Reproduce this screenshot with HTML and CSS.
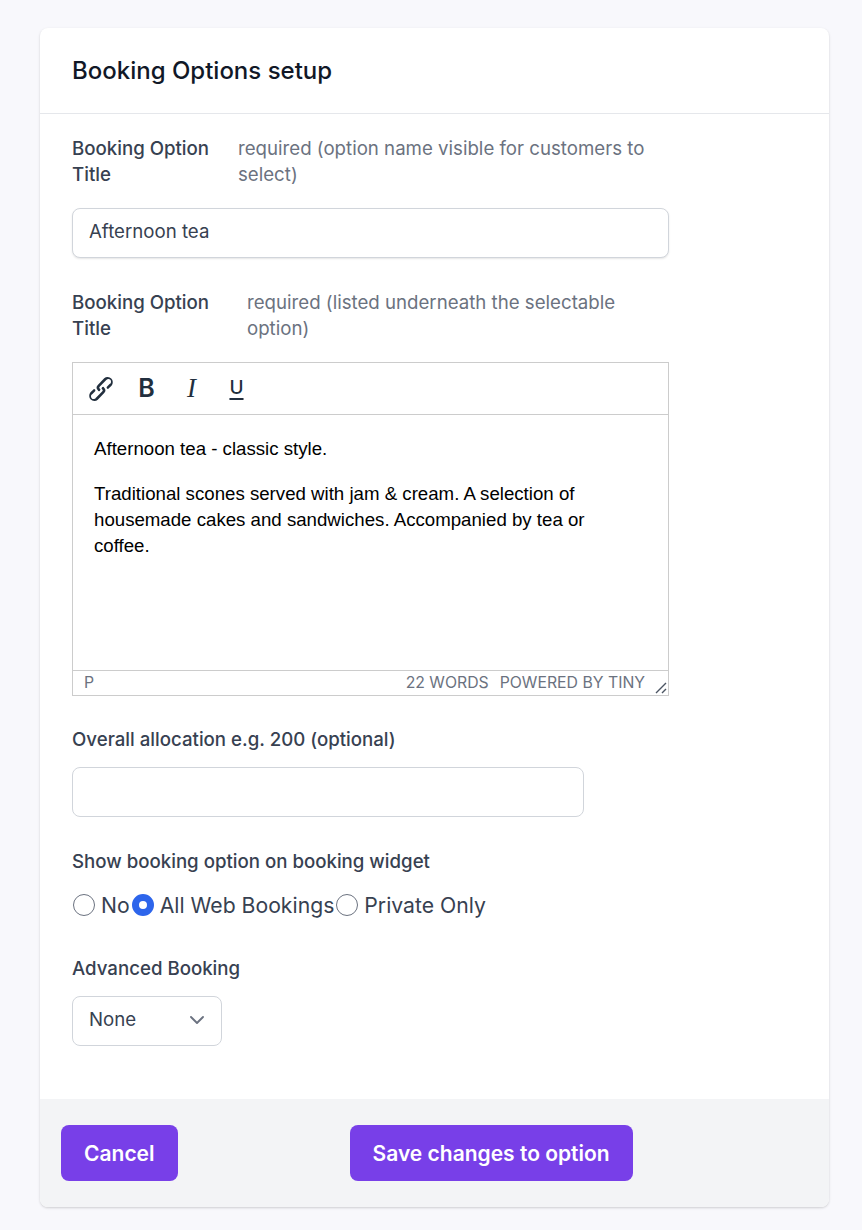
FILE: index.html
```html
<!doctype html>
<html lang="en">
  <head>
    <meta charset="UTF-8" />
    <title>Booking Options setup</title>
    <link rel="stylesheet" href="styles.css">
  </head>
  <body>
    <form class="card">
      <div class="card-header">
        <h2>Booking Options setup</h2>
      </div>

      <div class="card-body">
        <div class="label-row">
          <label class="label label-title" for="title">Booking Option Title</label>
          <span class="hint">required (option name visible for customers to select)</span>
        </div>
        <input class="input input-full" type="text" id="title" value="Afternoon tea" />

        <div class="label-row label-row-second">
          <label class="label label-desc">Booking Option Title</label>
          <span class="hint">required (listed underneath the selectable option)</span>
        </div>

        <div class="editor">
          <div class="toolbar">
            <span class="tool tool-link">
              <svg viewBox="0 0 24 24" width="32" height="32">
                <path d="M6.2 12.3a1 1 0 0 1 1.4 1.4l-2 2a2 2 0 1 0 2.6 2.8l4.8-4.8a1 1 0 0 0 0-1.4 1 1 0 1 1 1.4-1.3 2.9 2.9 0 0 1 0 4L9.6 20a3.9 3.9 0 0 1-5.5-5.5l2-2zm11.6-.6a1 1 0 0 1-1.4-1.4l2-2a2 2 0 1 0-2.6-2.8L11 10.3a1 1 0 0 0 0 1.4A1 1 0 1 1 9.6 13a2.9 2.9 0 0 1 0-4L14.4 4a3.9 3.9 0 0 1 5.5 5.5l-2 2z" />
              </svg>
            </span>
            <span class="tool tool-bold">B</span>
            <span class="tool tool-italic">I</span>
            <span class="tool tool-underline">U</span>
          </div>
          <div class="editor-content">
            <p>Afternoon tea - classic style.</p>
            <p>Traditional scones served with jam &amp; cream. A selection of housemade cakes and sandwiches. Accompanied by tea or coffee.</p>
          </div>
          <div class="statusbar">
            <span class="status-path">P</span>
            <span class="status-words">22 WORDS</span>
            <span class="status-brand">POWERED BY TINY</span>
            <svg class="resize" viewBox="0 0 12 12" width="12" height="12">
              <path d="M1 11 11 1M7 11l4-4" />
            </svg>
          </div>
        </div>

        <label class="label label-block label-allocation" for="allocation">Overall allocation e.g. 200 (optional)</label>
        <input class="input input-allocation" type="text" id="allocation" />

        <div class="label label-block label-show">Show booking option on booking widget</div>
        <div class="radios">
          <label class="radio"><input type="radio" name="show" /> <span>No</span></label>
          <label class="radio"><input type="radio" name="show" checked /> <span>All Web Bookings</span></label>
          <label class="radio"><input type="radio" name="show" /> <span>Private Only</span></label>
        </div>

        <label class="label label-block label-advanced" for="advanced">Advanced Booking</label>
        <div class="select-wrap">
          <select class="select" id="advanced">
            <option>None</option>
          </select>
          <svg class="chevron" viewBox="0 0 20 20" width="30" height="30">
            <path d="M6 8l4 4 4-4" />
          </svg>
        </div>
      </div>

      <div class="card-footer">
        <button type="button" class="btn">Cancel</button>
        <button type="submit" class="btn">Save changes to option</button>
      </div>
    </form>
  </body>
</html>
```

FILE: styles.css
```css
* {
  box-sizing: border-box;
}
body {
  margin: 0;
  padding: 28px 33px 23px 40px;
  background-color: #f8f8fc;
  font-family: Inter, "Noto Sans", sans-serif;
  color: #374151;
}
.card {
  background-color: #fff;
  border-radius: 8px;
  box-shadow: 0 1px 3px rgba(0, 0, 0, 0.12), 0 1px 2px rgba(0, 0, 0, 0.06);
  overflow: hidden;
}
.card-header {
  height: 86px;
  padding: 0 32px;
  display: flex;
  align-items: center;
  border-bottom: 1px solid #e5e7eb;
}
.card-header h2 {
  margin: 0;
  font-size: 24px;
  font-weight: 500;
  color: #111827;
}
.card-body {
  padding: 22px 32px 53px;
}
.label-row {
  display: flex;
  width: 597px;
}
.label-row-second {
  margin-top: 32px;
}
.label {
  font-size: 18.67px;
  line-height: 26px;
  font-weight: 500;
  color: #374151;
}
.label-title {
  flex: 0 0 166px;
}
.label-desc {
  flex: 0 0 175px;
}
.label-block {
  display: block;
}
.label-allocation {
  margin-top: 31px;
}
.label-show {
  margin-top: 32px;
}
.label-advanced {
  margin-top: 36px;
}
.hint {
  font-size: 18.67px;
  line-height: 26px;
  color: #6b7280;
}
.input {
  display: block;
  height: 50px;
  padding: 0 16px 4px;
  border: 1px solid #d1d5db;
  border-radius: 8px;
  background-color: #fff;
  font-family: inherit;
  font-size: 18.67px;
  color: #374151;
}
.input-full {
  width: 597px;
  margin-top: 20px;
  box-shadow: 0 1px 2px rgba(0, 0, 0, 0.1);
}
.input-allocation {
  width: 512px;
  margin-top: 14px;
}
.editor {
  width: 597px;
  height: 334px;
  margin-top: 20px;
  border: 1px solid #ccc;
  display: flex;
  flex-direction: column;
}
.toolbar {
  height: 52px;
  display: flex;
  align-items: center;
  border-bottom: 1px solid #ccc;
  color: #222f3e;
}
.tool {
  width: 45px;
  display: flex;
  justify-content: center;
  align-items: center;
}
.tool-link {
  margin-left: 5px;
  width: 46px;
}
.tool-link svg {
  fill: #222f3e;
}
.tool-bold {
  padding-bottom: 2px;
  font-size: 25px;
  font-weight: 600;
}
.tool-italic {
  font-family: "Liberation Serif", serif;
  font-style: italic;
  font-size: 27px;
}
.tool-underline {
  padding-bottom: 2px;
  font-size: 19px;
  font-weight: 500;
  text-decoration: underline;
  text-decoration-thickness: 2px;
  text-underline-offset: 4px;
}
.editor-content {
  flex: 1;
  padding: 21px 30px 0 21px;
  font-family: "Liberation Sans", Arial, sans-serif;
  font-size: 18.67px;
  line-height: 26px;
  color: #000;
}
.editor-content p {
  margin: 0 0 19px;
}
.statusbar {
  height: 25px;
  padding: 0 10px 2px 11px;
  display: flex;
  align-items: center;
  border-top: 1px solid #ccc;
  font-size: 15.8px;
  color: #6b7280;
}
.status-path {
  margin-right: auto;
}
.status-brand {
  margin-left: 11px;
  margin-right: 10px;
}
.resize {
  flex-shrink: 0;
  margin-top: 12px;
  margin-right: -9px;
}
.resize path {
  fill: none;
  stroke: #4b5563;
  stroke-width: 1.4;
}
.radios {
  display: flex;
  gap: 1px;
  margin-top: 15px;
  height: 30px;
  align-items: center;
}
.radio {
  display: flex;
  align-items: center;
  font-size: 21.2px;
  color: #374151;
}
.radio input {
  appearance: none;
  width: 22px;
  height: 22px;
  margin: 0 6px 0 1px;
  border: 1px solid #6b7280;
  border-radius: 50%;
  background-color: #fff;
}
.radio input:checked {
  border: 7px solid #2d65eb;
}
.select-wrap {
  position: relative;
  width: 150px;
  margin-top: 14px;
}
.select {
  appearance: none;
  display: block;
  width: 100%;
  height: 50px;
  padding: 0 16px 3px;
  border: 1px solid #d1d5db;
  border-radius: 8px;
  background-color: #fff;
  font-family: inherit;
  font-size: 18.67px;
  color: #374151;
}
.chevron {
  position: absolute;
  right: 10px;
  top: 9px;
  pointer-events: none;
}
.chevron path {
  fill: none;
  stroke: #6b7280;
  stroke-width: 1.25;
  stroke-linecap: round;
  stroke-linejoin: round;
}
.card-footer {
  height: 108px;
  padding: 26px 21px 0;
  display: flex;
  align-items: flex-start;
  gap: 172px;
  background-color: #f3f4f6;
}
.btn {
  height: 56px;
  padding: 0 23px;
  border: none;
  border-radius: 8px;
  background-color: #783fe8;
  color: #fff;
  font-family: inherit;
  font-size: 21px;
  font-weight: 600;
}
```
